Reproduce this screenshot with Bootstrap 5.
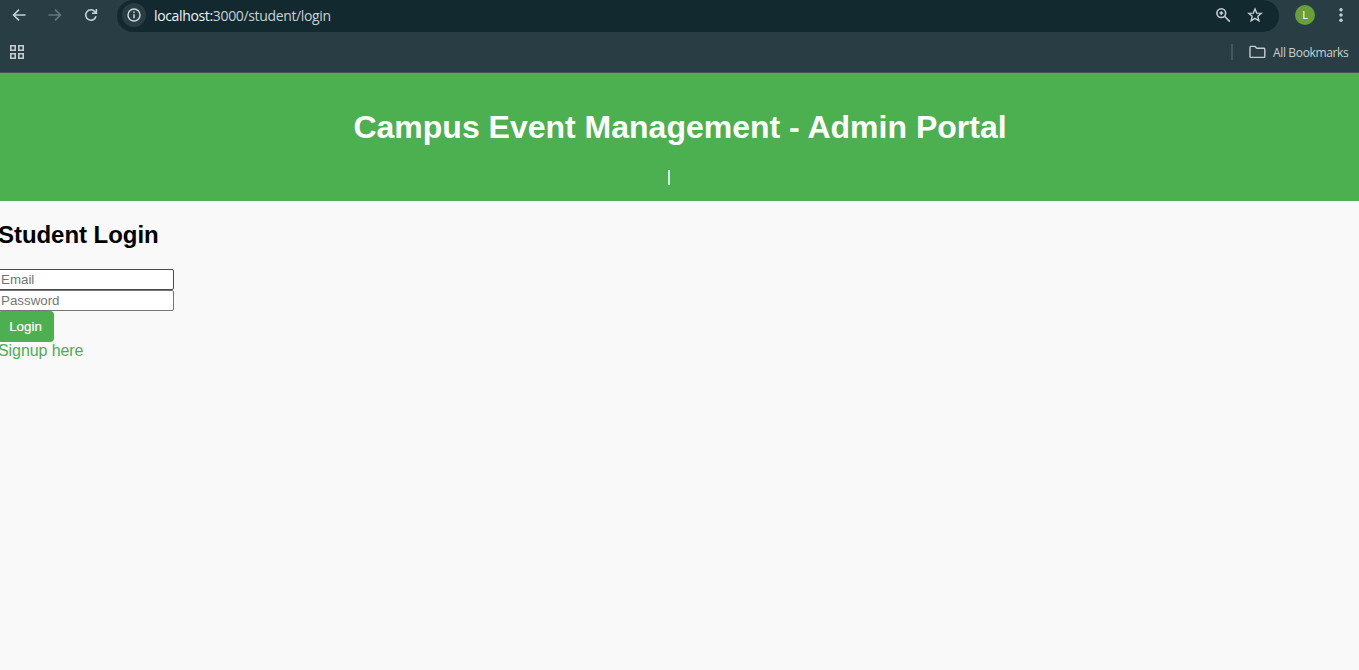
<!DOCTYPE html>
<html lang="en">
<head>
<meta charset="utf-8">
<title>Campus Event Management</title>
<link href="https://cdn.jsdelivr.net/npm/bootstrap@5.3.0/dist/css/bootstrap.min.css" rel="stylesheet">
<style>
body{background:#f9f9f9;color:#000;font:16px/18px "Liberation Sans",Arial,sans-serif;height:670px;overflow:hidden}
svg{display:block;flex:none}
.chrome{background:#283e44;height:73px;border-bottom:1px solid #4a5357;color:#c7d0d2;font-family:"Open Sans",sans-serif}
.toolbar{height:32px;padding-left:11px}
.tools{width:106px;gap:20px;height:32px;padding-bottom:2px}
.omnibox{background:#12292f;width:1162px;height:32px;border-radius:16px;padding:0 16px 2px 5px}
.info{width:24px;height:24px;background:#283e44}
.address{font-size:14px;line-height:20px;margin-left:8px;padding-top:1px;letter-spacing:-.35px;color:#c9d1d3}
.address span{color:#edf3f4}
.avatar{width:20px;height:20px;background:#689f38;color:#fff;font-size:11px;margin-left:16px;margin-bottom:2px}
.menu{margin-left:18px;margin-bottom:2px}
.marks{height:40px;padding:0 10px 0 9px}
.divider{width:2px;height:16px;background:#43585e;margin-right:16px}
.all{font-size:12px;line-height:16px;letter-spacing:-.35px;margin-left:7px;width:76px;padding-top:1px;white-space:nowrap}
.banner{background:#4caf50;height:128px;color:#fff}
.banner h1{font-size:32px;line-height:36px;font-weight:700;margin:0;padding-top:36px;padding-left:1px}
.caret{width:2px;height:15px;background:#d3efea;margin:25px 0 0 668px}
.login{margin-left:-2px;padding-top:20px}
.login h2{font-size:24px;line-height:28px;font-weight:700;letter-spacing:-.05px;margin:0 0 20px}
.field{width:176px;height:21px;min-height:0;border:1px solid #767676;border-radius:2px;padding:1px 2px;font-size:13.333px;line-height:15px;background:#fff}
.field::placeholder{color:#757575}
.field.hot{border-color:#4a4a4a}
.go{background:#4caf50;color:#fff;width:56px;height:31px;border-radius:4px;border:0;padding:0 1px 0 0;font-size:13.333px;line-height:31px;-webkit-text-stroke:.2px #fff}
.signup{color:#4caf50;letter-spacing:-.08px}
</style>
</head>
<body>
<header class="chrome">
 <div class="toolbar d-flex align-items-center">
  <div class="tools d-flex align-items-center">
   <svg width="16" height="16" fill="none" stroke="#c0d2d6" stroke-width="1.6"><path d="M14.5 8H3M8 2.6L2.6 8 8 13.4"/></svg>
   <svg width="16" height="16" fill="none" stroke="#66777c" stroke-width="1.6"><path d="M1.5 8H13M8 2.6L13.4 8 8 13.4"/></svg>
   <svg width="16" height="16" fill="none" stroke="#c0d2d6" stroke-width="1.6"><path d="M13 9.2A5.2 5.2 0 1 1 12 4.7L13 5.8M13.4 2V6.3H9"/></svg>
  </div>
  <div class="omnibox d-flex align-items-center">
   <div class="info rounded-circle d-flex align-items-center justify-content-center"><svg width="14" height="14" fill="none" stroke="#d2dadb" stroke-width="1.4"><circle cx="7" cy="7" r="6"/><path d="M7 6.2V10.2M7 3.6V5.1" stroke-width="1.5"/></svg></div>
   <div class="address"><span>localhost:</span>3000/student/login</div>
   <svg class="ms-auto" width="16" height="16" fill="none" stroke="#c5ced0" stroke-width="1.6"><circle cx="6.3" cy="6.1" r="4.4"/><path d="M9.5 9.3L14.8 14.6"/><path d="M4.4 6.1H8.2M6.3 4.2V8" stroke-width="1.5"/></svg>
   <svg class="ms-3" width="16" height="16" fill="none" stroke="#c5ced0" stroke-width="1.4"><path d="M8 2L9.7 6.1 14.2 6.4 10.8 9.3 11.9 13.7 8 11.3 4.1 13.7 5.2 9.3 1.8 6.4 6.3 6.1Z"/></svg>
  </div>
  <div class="avatar rounded-circle d-flex align-items-center justify-content-center">L</div>
  <svg class="menu" width="16" height="16" fill="#c0d2d6"><circle cx="8" cy="2.7" r="1.7"/><circle cx="8" cy="8" r="1.7"/><circle cx="8" cy="13.3" r="1.7"/></svg>
 </div>
 <div class="marks d-flex align-items-center">
  <svg width="16" height="16" fill="none" stroke="#c7cccd" stroke-width="1.6"><path d="M1.8 1.8h4.4v4.4H1.8zM9.8 1.8h4.4v4.4H9.8zM1.8 9.8h4.4v4.4H1.8zM9.8 9.8h4.4v4.4H9.8z"/></svg>
  <div class="divider ms-auto"></div>
  <svg width="17" height="14" fill="none" stroke="#c7cccd" stroke-width="1.4"><path d="M1 2.2Q1 1.4 1.8 1.4H6L7.8 3.2H15Q15.8 3.2 15.8 4V11.6Q15.8 12.4 15 12.4H1.8Q1 12.4 1 11.6Z"/></svg>
  <div class="all">All Bookmarks</div>
 </div>
</header>
<section class="banner">
 <h1 class="text-center">Campus Event Management - Admin Portal</h1>
 <div class="caret"></div>
</section>
<main class="login">
 <h2>Student Login</h2>
 <form class="d-flex flex-column align-items-start">
  <input class="form-control field hot" type="email" placeholder="Email">
  <input class="form-control field" type="password" placeholder="Password">
  <button class="btn go" type="button">Login</button>
 </form>
 <a class="signup text-decoration-none" href="#">Signup here</a>
</main>
<script src="https://cdn.jsdelivr.net/npm/bootstrap@5.3.0/dist/js/bootstrap.bundle.min.js"></script>
</body>
</html>
